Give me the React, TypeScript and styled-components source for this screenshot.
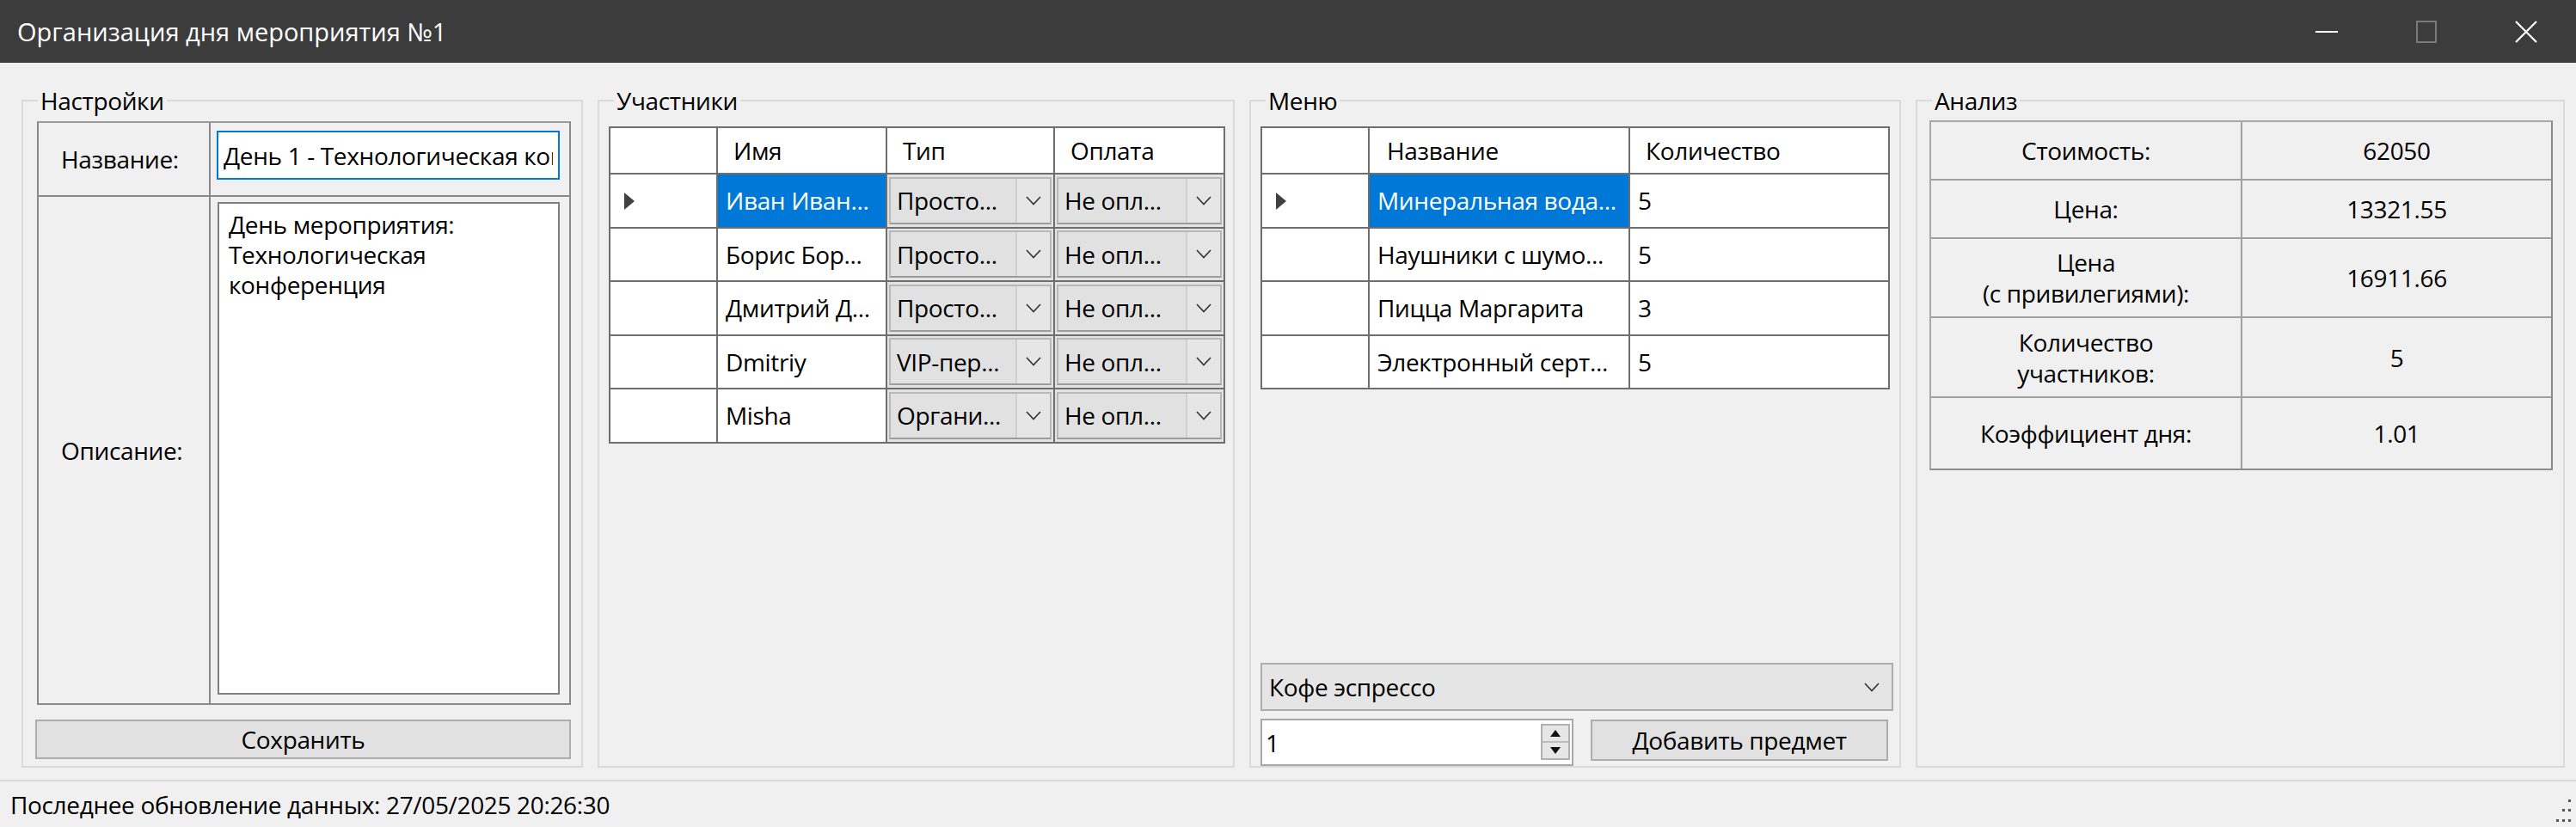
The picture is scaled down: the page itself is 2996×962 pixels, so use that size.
import React from 'react';
import styled, { createGlobalStyle } from 'styled-components';

const FONT = `"Open Sans", "Noto Sans", "DejaVu Sans", sans-serif`;

const GlobalStyle = createGlobalStyle`
  html, body { margin: 0; padding: 0; background: #f0f0f0; }
  body { font-family: ${FONT}; color: #000; overflow: hidden; }
  * { box-sizing: border-box; }
`;

const Window = styled.div`
  width: 2996px;
  height: 962px;
  display: flex;
  flex-direction: column;
  background: #f0f0f0;
  font-size: 28px;
  letter-spacing: -0.35px;
`;

const TitleBar = styled.header`
  height: 73px;
  flex: none;
  background: #3c3c3c;
  display: flex;
  align-items: center;
  padding-left: 20px;
  color: #fff;
`;

const Title = styled.div`
  flex: 1;
  font-size: 29px;
  letter-spacing: 0;
`;

const WinButtons = styled.div`
  display: flex;
  height: 100%;
`;

const WinButton = styled.div`
  width: 116px;
  height: 100%;
  display: flex;
  align-items: center;
  justify-content: center;
`;

const Main = styled.main`
  flex: 1;
  min-height: 0;
  display: grid;
  grid-template-columns: 653px 741px 758px 755px;
  column-gap: 17px;
  padding: 27px 13px 14px 25px;
`;

const Group = styled.fieldset`
  margin: 0;
  padding: 0;
  min-width: 0;
  border: 2px solid #dadada;
  display: flex;
  flex-direction: column;
`;

const Legend = styled.legend`
  font-size: 28px;
  line-height: 34px;
  padding: 0 3px;
  margin-left: 17px;
`;

const GroupBody = styled.div<{ $pad: string }>`
  flex: 1;
  min-height: 0;
  display: flex;
  flex-direction: column;
  padding: ${(p) => p.$pad};
`;

/* ---------- Settings ---------- */

const SettingsTable = styled.div`
  flex: 1;
  display: grid;
  grid-template-columns: 200px 1fr;
  grid-template-rows: 86px 1fr;
  border-top: 2px solid #9a9a9a;
  border-left: 2px solid #8a8a8a;
  border-right: 2px solid #8a8a8a;
  border-bottom: 2px solid #8a8a8a;
`;

const SettingsLabel = styled.div<{ $last?: boolean }>`
  display: flex;
  align-items: center;
  padding-left: 26px;
  border-right: 2px solid #8a8a8a;
  border-bottom: ${(p) => (p.$last ? 'none' : '2px solid #8a8a8a')};
`;

const SettingsField = styled.div<{ $last?: boolean }>`
  display: flex;
  padding: ${(p) => (p.$last ? '6px 11px 10px 8px' : '9px 11px 16px 7px')};
  border-bottom: ${(p) => (p.$last ? 'none' : '2px solid #8a8a8a')};
`;

const TextInput = styled.input`
  width: 100%;
  height: 57px;
  border: 2px solid #0078d7;
  background: #fff;
  font: inherit;
  font-size: 28px;
  letter-spacing: inherit;
  padding: 0 6px;
  outline: none;
  color: #000;
`;

const TextArea = styled.textarea`
  width: 100%;
  height: 100%;
  border: 2px solid #7f7f7f;
  background: #fff;
  font: inherit;
  font-size: 28px;
  letter-spacing: inherit;
  line-height: 35px;
  padding: 7px 11px;
  resize: none;
  outline: none;
  overflow: hidden;
  color: #000;
`;

const Button = styled.button<{ $h: number }>`
  height: ${(p) => p.$h}px;
  background: #e1e1e1;
  border: 2px solid #adadad;
  font: inherit;
  font-size: 28px;
  letter-spacing: inherit;
  color: #000;
  padding: 0;
  display: flex;
  align-items: center;
  justify-content: center;
`;

const SaveButton = styled(Button)`
  margin-top: 17px;
  margin-left: -2px;
`;

/* ---------- Data grids ---------- */

const Grid = styled.table<{ $w: number }>`
  border-collapse: collapse;
  table-layout: fixed;
  width: ${(p) => p.$w}px;
  background: #fff;
  font-size: 28px;
  flex: none;
`;

const HeadRow = styled.tr`
  height: 54px;
`;

const BodyRow = styled.tr`
  height: 62.5px;
`;

const HeadCell = styled.th<{ $pad: number }>`
  border: 2px solid #6e6e6e;
  font-weight: 400;
  text-align: left;
  padding: 0 0 0 ${(p) => p.$pad}px;
  white-space: nowrap;
  overflow: hidden;
`;

const RowHeader = styled.td`
  border: 2px solid #6e6e6e;
  padding: 0 0 0 16px;
  background: #fff;
`;

const Cell = styled.td<{ $selected?: boolean }>`
  border: 2px solid #6e6e6e;
  padding: 0 0 0 9px;
  white-space: nowrap;
  overflow: hidden;
  background: ${(p) => (p.$selected ? '#0078d7' : '#fff')};
  color: ${(p) => (p.$selected ? '#fff' : '#000')};
`;

const ComboCell = styled.td`
  border: 2px solid #6e6e6e;
  padding: 2px;
  background: #e3e3e3;
`;

const CellCombo = styled.div`
  height: 55px;
  display: flex;
  border: 2px solid #b8b8b8;
  border-bottom-color: #9c9c9c;
  background: #e1e1e1;
`;

const ComboText = styled.div`
  flex: 1;
  min-width: 0;
  display: flex;
  align-items: center;
  padding-left: 7px;
  white-space: nowrap;
  overflow: hidden;
`;

const ComboArrow = styled.div`
  width: 40px;
  flex: none;
  display: flex;
  align-items: center;
  justify-content: center;
  border-left: 2px solid #cfcfcf;
  background: #e6e6e6;
`;

const Chevron = () => (
  <svg width="18" height="11" viewBox="0 0 18 11">
    <polyline points="1,1 9,9.5 17,1" fill="none" stroke="#333" strokeWidth="1.6" />
  </svg>
);

const RowArrow = () => (
  <svg width="12" height="20" viewBox="0 0 12 20">
    <polygon points="0,0 12,10 0,20" fill="#404040" />
  </svg>
);

/* ---------- Menu controls ---------- */

const Spacer = styled.div`
  flex: 1;
`;

const Combo = styled.div`
  height: 56px;
  display: flex;
  align-items: center;
  justify-content: space-between;
  background: #e5e5e5;
  border: 2px solid #adadad;
  padding: 0 14px 0 8px;
  margin-right: -3px;
`;

const AddRow = styled.div`
  display: grid;
  grid-template-columns: 364px 346px;
  column-gap: 20px;
  margin-top: 9px;
  align-items: start;
`;

const Spin = styled.div`
  height: 55px;
  display: flex;
  background: #fff;
  border: 2px solid #a8a8a8;
`;

const SpinValue = styled.div`
  flex: 1;
  display: flex;
  align-items: center;
  padding-left: 4px;
`;

const SpinButtons = styled.div`
  width: 34px;
  margin: 4px 2px 5px 0;
  display: flex;
  flex-direction: column;
  border: 2px solid #b0b0b0;
  background: #e6e6e6;
`;

const SpinButton = styled.div<{ $top?: boolean }>`
  flex: 1;
  display: flex;
  align-items: center;
  justify-content: center;
  border-bottom: ${(p) => (p.$top ? '2px solid #bdbdbd' : 'none')};
`;

const AddButton = styled(Button)`
  margin-top: 1px;
`;

/* ---------- Analysis ---------- */

const AnalysisTable = styled.div`
  display: grid;
  grid-template-columns: 362px 1fr;
  grid-template-rows: 68px 68px 92px 93px 82px;
  width: 725px;
  border-top: 2px solid #a8a8a8;
  border-left: 2px solid #a8a8a8;
  border-right: 2px solid #8c8c8c;
  border-bottom: 2px solid #8c8c8c;
`;

const AnalysisCell = styled.div<{ $left?: boolean; $last?: boolean }>`
  display: flex;
  align-items: center;
  justify-content: center;
  text-align: center;
  line-height: 36px;
  border-right: ${(p) => (p.$left ? '2px solid #a0a0a0' : 'none')};
  border-bottom: ${(p) => (p.$last ? 'none' : '2px solid #a0a0a0')};
`;

/* ---------- Status bar ---------- */

const StatusBar = styled.footer`
  height: 55px;
  flex: none;
  border-top: 2px solid #dadada;
  display: flex;
  align-items: center;
  justify-content: space-between;
  padding-left: 12px;
  font-size: 28px;
`;

const Grip = styled.div`
  align-self: flex-end;
  display: flex;
  margin-right: 5px;
  margin-bottom: 2px;
`;

const participants = [
  { name: 'Иван Иван...', type: 'Просто...', pay: 'Не опл...', current: true },
  { name: 'Борис Бор...', type: 'Просто...', pay: 'Не опл...' },
  { name: 'Дмитрий Д...', type: 'Просто...', pay: 'Не опл...' },
  { name: 'Dmitriy', type: 'VIP-пер...', pay: 'Не опл...' },
  { name: 'Misha', type: 'Органи...', pay: 'Не опл...' },
];

const menu = [
  { name: 'Минеральная вода...', qty: '5', current: true },
  { name: 'Наушники с шумо...', qty: '5' },
  { name: 'Пицца Маргарита', qty: '3' },
  { name: 'Электронный серт...', qty: '5' },
];

const analysis: [React.ReactNode, string][] = [
  ['Стоимость:', '62050'],
  ['Цена:', '13321.55'],
  [<>Цена<br />(с привилегиями):</>, '16911.66'],
  [<>Количество<br />участников:</>, '5'],
  ['Коэффициент дня:', '1.01'],
];

export default function App() {
  return (
    <>
      <GlobalStyle />
      <Window>
        <TitleBar>
          <Title>Организация дня мероприятия №1</Title>
          <WinButtons>
            <WinButton>
              <svg width="26" height="4" viewBox="0 0 26 4">
                <rect x="0" y="1" width="26" height="2" fill="#fff" />
              </svg>
            </WinButton>
            <WinButton>
              <svg width="24" height="26" viewBox="0 0 24 26">
                <rect x="1" y="1" width="22" height="24" fill="none" stroke="#7a7a7a" strokeWidth="2" />
              </svg>
            </WinButton>
            <WinButton>
              <svg width="26" height="26" viewBox="0 0 26 26">
                <path d="M1 1 L25 25 M25 1 L1 25" stroke="#fff" strokeWidth="2.2" />
              </svg>
            </WinButton>
          </WinButtons>
        </TitleBar>

        <Main>
          <Group>
            <Legend>Настройки</Legend>
            <GroupBody $pad="7px 12px 8px 16px">
              <SettingsTable>
                <SettingsLabel>Название:</SettingsLabel>
                <SettingsField>
                  <TextInput readOnly value="День 1 - Технологическая конференция" />
                </SettingsField>
                <SettingsLabel $last>Описание:</SettingsLabel>
                <SettingsField $last>
                  <TextArea readOnly value={'День мероприятия:\nТехнологическая\nконференция'} />
                </SettingsField>
              </SettingsTable>
              <SaveButton $h={46}>Сохранить</SaveButton>
            </GroupBody>
          </Group>

          <Group>
            <Legend>Участники</Legend>
            <GroupBody $pad="13px 11px 8px 11px">
              <Grid $w={715}>
                <colgroup>
                  <col style={{ width: 125 }} />
                  <col style={{ width: 197 }} />
                  <col style={{ width: 195 }} />
                  <col style={{ width: 198 }} />
                </colgroup>
                <thead>
                  <HeadRow>
                    <HeadCell $pad={0} />
                    <HeadCell $pad={18}>Имя</HeadCell>
                    <HeadCell $pad={18}>Тип</HeadCell>
                    <HeadCell $pad={18}>Оплата</HeadCell>
                  </HeadRow>
                </thead>
                <tbody>
                  {participants.map((p) => (
                    <BodyRow key={p.name}>
                      <RowHeader>{p.current && <RowArrow />}</RowHeader>
                      <Cell $selected={p.current}>{p.name}</Cell>
                      <ComboCell>
                        <CellCombo>
                          <ComboText>{p.type}</ComboText>
                          <ComboArrow><Chevron /></ComboArrow>
                        </CellCombo>
                      </ComboCell>
                      <ComboCell>
                        <CellCombo>
                          <ComboText>{p.pay}</ComboText>
                          <ComboArrow><Chevron /></ComboArrow>
                        </CellCombo>
                      </ComboCell>
                    </BodyRow>
                  ))}
                </tbody>
              </Grid>
            </GroupBody>
          </Group>

          <Group>
            <Legend>Меню</Legend>
            <GroupBody $pad="13px 10px 0 11px">
              <Grid $w={730}>
                <colgroup>
                  <col style={{ width: 125 }} />
                  <col style={{ width: 303 }} />
                  <col style={{ width: 302 }} />
                </colgroup>
                <thead>
                  <HeadRow>
                    <HeadCell $pad={0} />
                    <HeadCell $pad={20}>Название</HeadCell>
                    <HeadCell $pad={18}>Количество</HeadCell>
                  </HeadRow>
                </thead>
                <tbody>
                  {menu.map((m) => (
                    <BodyRow key={m.name}>
                      <RowHeader>{m.current && <RowArrow />}</RowHeader>
                      <Cell $selected={m.current}>{m.name}</Cell>
                      <Cell>{m.qty}</Cell>
                    </BodyRow>
                  ))}
                </tbody>
              </Grid>
              <Spacer />
              <Combo>
                <span>Кофе эспрессо</span>
                <Chevron />
              </Combo>
              <AddRow>
                <Spin>
                  <SpinValue>1</SpinValue>
                  <SpinButtons>
                    <SpinButton $top>
                      <svg width="12" height="8" viewBox="0 0 12 8"><polygon points="6,0 12,8 0,8" fill="#111" /></svg>
                    </SpinButton>
                    <SpinButton>
                      <svg width="12" height="8" viewBox="0 0 12 8"><polygon points="0,0 12,0 6,8" fill="#111" /></svg>
                    </SpinButton>
                  </SpinButtons>
                </Spin>
                <AddButton $h={48}>Добавить предмет</AddButton>
              </AddRow>
            </GroupBody>
          </Group>

          <Group>
            <Legend>Анализ</Legend>
            <GroupBody $pad="6px 12px 8px 14px">
              <AnalysisTable>
                {analysis.map(([label, value], i) => (
                  <React.Fragment key={i}>
                    <AnalysisCell $left $last={i === analysis.length - 1}>{label}</AnalysisCell>
                    <AnalysisCell $last={i === analysis.length - 1}>{value}</AnalysisCell>
                  </React.Fragment>
                ))}
              </AnalysisTable>
            </GroupBody>
          </Group>
        </Main>

        <StatusBar>
          <span>Последнее обновление данных: 27/05/2025 20:26:30</span>
          <Grip>
            <svg width="24" height="32" viewBox="0 0 24 32">
              <g fill="#555">
                <rect x="20" y="2" width="3" height="3" />
                <rect x="13" y="13" width="3" height="3" />
                <rect x="20" y="13" width="3" height="3" />
                <rect x="6" y="25" width="3" height="3" />
                <rect x="13" y="25" width="3" height="3" />
                <rect x="20" y="25" width="3" height="3" />
              </g>
            </svg>
          </Grip>
        </StatusBar>
      </Window>
    </>
  );
}
